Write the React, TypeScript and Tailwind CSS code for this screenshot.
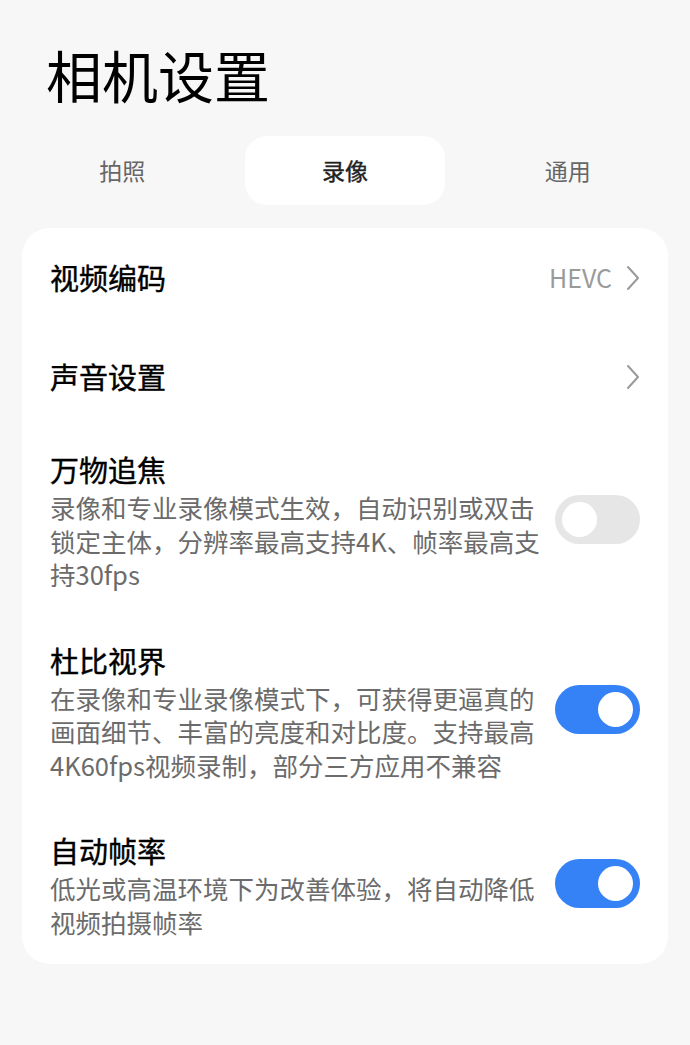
import { useState } from 'react';

const font = { fontFamily: '"Noto Sans CJK SC", "Noto Sans", sans-serif' };

const Chevron = () => (
  <svg className="w-[14px] h-[26px]" viewBox="0 0 14 26" fill="none" stroke="#9a9a9a" strokeWidth={2} strokeLinecap="round" strokeLinejoin="round">
    <path d="M2 2l10 11L2 24" />
  </svg>
);

const Toggle = ({ on, onChange }: { on: boolean; onChange: () => void }) => (
  <button
    type="button"
    onClick={onChange}
    className={`shrink-0 ml-2 w-[85px] h-[49px] rounded-full flex items-center px-[7px] transition-colors ${
      on ? 'bg-[#3482f6] justify-end' : 'bg-[#e6e6e6] justify-start'
    }`}
  >
    <span className="block w-[35px] h-[35px] rounded-full bg-white" />
  </button>
);

interface SwitchRowProps {
  title: string;
  desc: string;
  on: boolean;
  onChange: () => void;
}

const SwitchRow = ({ title, desc, on, onChange }: SwitchRowProps) => (
  <div className="flex items-center pt-[22px] pb-[26px]">
    <div className="flex-1 min-w-0">
      <div className="text-[29px] leading-[42px] text-black [-webkit-text-stroke:0.4px_black]">{title}</div>
      <div className="text-[25.5px] leading-[33.5px] text-[#6b6b6b]">{desc}</div>
    </div>
    <Toggle on={on} onChange={onChange} />
  </div>
);

const tabs = ['拍照', '录像', '通用'];

export default function App() {
  const [tab, setTab] = useState(1);
  const [focus, setFocus] = useState(false);
  const [dolby, setDolby] = useState(true);
  const [autoFps, setAutoFps] = useState(true);

  return (
    <div className="min-h-[1045px] bg-[#f7f7f7]" style={font}>
      <h1 className="pl-[46px] pt-[34px] text-[56px] leading-[80px] font-normal text-black">相机设置</h1>

      <div className="mx-[22px] mt-[22px] grid grid-cols-3 gap-[22px]">
        {tabs.map((t, i) => (
          <button
            key={t}
            onClick={() => setTab(i)}
            className={`h-[69px] rounded-[22px] text-[23px] ${
              tab === i ? 'bg-white text-[#222] [-webkit-text-stroke:0.4px_#222]' : 'text-[#666]'
            }`}
          >
            {t}
          </button>
        ))}
      </div>

      <div className="mx-[22px] mt-[23px] bg-white rounded-[28px] px-[28px]">
        <div className="h-[99px] flex items-center justify-between">
          <span className="text-[29px] text-black [-webkit-text-stroke:0.4px_black]">视频编码</span>
          <div className="flex items-center gap-[14px]">
            <span className="text-[25px] text-[#9a9a9a]">HEVC</span>
            <Chevron />
          </div>
        </div>
        <div className="h-[99px] flex items-center justify-between">
          <span className="text-[29px] text-black [-webkit-text-stroke:0.4px_black]">声音设置</span>
          <Chevron />
        </div>
        <SwitchRow
          title="万物追焦"
          desc="录像和专业录像模式生效，自动识别或双击锁定主体，分辨率最高支持4K、帧率最高支持30fps"
          on={focus}
          onChange={() => setFocus(!focus)}
        />
        <SwitchRow
          title="杜比视界"
          desc="在录像和专业录像模式下，可获得更逼真的画面细节、丰富的亮度和对比度。支持最高4K60fps视频录制，部分三方应用不兼容"
          on={dolby}
          onChange={() => setDolby(!dolby)}
        />
        <SwitchRow
          title="自动帧率"
          desc="低光或高温环境下为改善体验，将自动降低视频拍摄帧率"
          on={autoFps}
          onChange={() => setAutoFps(!autoFps)}
        />
      </div>
    </div>
  );
}
